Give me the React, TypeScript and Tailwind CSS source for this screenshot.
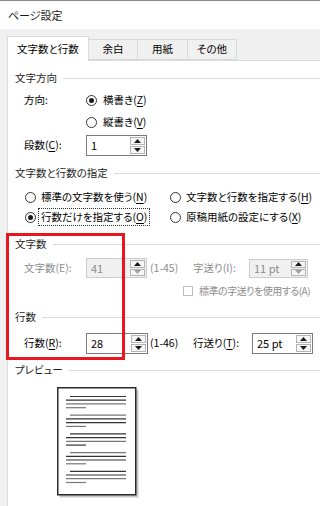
import React from 'react';

// --- small pieces ---
const U = ({ children }: { children: React.ReactNode }) => (
  <span className="underline underline-offset-2">{children}</span>
);

const Radio = ({ checked }: { checked?: boolean }) => (
  <span className="w-[11px] h-[11px] rounded-full border border-[#333333] bg-white flex items-center justify-center shrink-0">
    {checked && <span className="w-[5px] h-[5px] rounded-full bg-[#1a1a1a]" />}
  </span>
);

const Heading = ({ label, className = '' }: { label: string; className?: string }) => (
  <div className={`flex items-center h-[22px] pl-[7px] ${className}`}>
    <span className="text-[#1e1e1e]">{label}</span>
    <span className="flex-1 h-px bg-[#dcdcdc] ml-[6px]" />
  </div>
);

const Arrow = ({ up, color }: { up?: boolean; color: string }) => (
  <svg width="7" height="4" viewBox="0 0 7 4">
    <path d={up ? 'M0 4 L3.5 0 L7 4 Z' : 'M0 0 L3.5 4 L7 0 Z'} fill={color} />
  </svg>
);

const Spin = ({ value, className, disabled }: { value: string; className: string; disabled?: boolean }) => (
  <div
    className={`flex shrink-0 border ${className} ${
      disabled ? 'border-[#cccccc] bg-[#f0f0f0] text-[#8c8c8c]' : 'border-[#7a7a7a] bg-white text-black'
    }`}
  >
    <span className="flex-1 flex items-center pl-[4px] text-[11px]">{value}</span>
    <div className="flex flex-col w-[15px] my-[1px] mr-[1px] gap-px">
      <div className="flex-1 flex items-center justify-center border border-[#b4b4b4] bg-[#f6f6f6]">
        <Arrow up color="#1a1a1a" />
      </div>
      <div className="flex-1 flex items-center justify-center border border-[#b4b4b4] bg-[#f6f6f6]">
        <Arrow color={disabled ? '#a0a0a0' : '#1a1a1a'} />
      </div>
    </div>
  </div>
);

// preview page: five paragraphs of grey/black rules
const PreviewPage = () => {
  const paras = [0, 1, 2, 3, 4];
  return (
    <svg width="82" height="111" viewBox="0 0 82 111">
      <rect x="2.5" y="2.5" width="79" height="108" fill="#c8c8c8" />
      <rect x="0.75" y="0.75" width="78" height="107" fill="#ffffff" stroke="#2b2b2b" strokeWidth="1.5" />
      {paras.map((p) => {
        const y = 9.5 + p * 18.7;
        return (
          <g key={p} strokeWidth="1.2">
            <line x1="13" y1={y} x2="69" y2={y} stroke={p % 2 ? '#777777' : '#333333'} />
            <line x1="9" y1={y + 3.7} x2="69" y2={y + 3.7} stroke="#333333" />
            <line x1="9" y1={y + 7.4} x2="69" y2={y + 7.4} stroke={p % 2 ? '#333333' : '#777777'} />
            <line x1="9" y1={y + 11.2} x2="29" y2={y + 11.2} stroke={p === 2 ? '#333333' : '#777777'} />
          </g>
        );
      })}
    </svg>
  );
};

export default function App() {
  return (
    <div className="w-[320px] h-[506px] overflow-hidden relative bg-[#f0f0f0] text-[10.5px] leading-none text-black font-['Noto_Sans_CJK_JP',sans-serif] [font-feature-settings:'palt']">
      {/* title bar */}
      <div className="h-[29px] bg-white border-t border-[#8a8a8a] flex items-center pl-[8px] text-[11px] text-[#1a1a1a]">
        ページ設定
      </div>

      {/* tabs */}
      <div className="flex items-end pt-[7px] pl-[7px] h-[31px]">
        <div className="relative z-10 -mb-px h-[25px] w-[82px] bg-white border border-b-0 border-[#d9d9d9] flex items-center justify-center">
          文字数と行数
        </div>
        <div className="h-[21px] w-[49px] border border-l-0 border-[#d9d9d9] flex items-center justify-center">余白</div>
        <div className="h-[21px] w-[50px] border border-l-0 border-[#d9d9d9] flex items-center justify-center">用紙</div>
        <div className="h-[21px] w-[49px] border border-l-0 border-[#d9d9d9] flex items-center justify-center">その他</div>
      </div>

      {/* panel */}
      <div className="ml-[7px] h-[447px] bg-white border-l border-t border-[#d9d9d9] pt-[6px]">
        <Heading label="文字方向" />
        <div className="flex items-center h-[22px] pl-[16px]">
          <span className="w-[62px]">方向:</span>
          <Radio checked />
          <span className="ml-[6px]">横書き(<U>Z</U>)</span>
        </div>
        <div className="flex items-center h-[22px] pl-[78px]">
          <Radio />
          <span className="ml-[6px]">縦書き(<U>V</U>)</span>
        </div>
        <div className="flex items-center h-[24px] pl-[16px]">
          <span className="w-[62px]">段数(<U>C</U>):</span>
          <Spin value="1" className="w-[61px] h-[21px]" />
        </div>

        <Heading label="文字数と行数の指定" className="mt-[5px]" />
        <div className="mt-[3px] grid grid-cols-[145px_1fr] pl-[17px]">
          <div className="flex items-center h-[20px]">
            <Radio />
            <span className="ml-[5px]">標準の文字数を使う(<U>N</U>)</span>
          </div>
          <div className="flex items-center h-[20px]">
            <Radio />
            <span className="ml-[5px] whitespace-nowrap">文字数と行数を指定する(<U>H</U>)</span>
          </div>
          <div className="flex items-center h-[20px]">
            <Radio checked />
            <span className="ml-[2px] px-[2px] py-[3px] border border-dotted border-[#333333] whitespace-nowrap">
              行数だけを指定する(<U>O</U>)
            </span>
          </div>
          <div className="flex items-center h-[20px]">
            <Radio />
            <span className="ml-[5px] whitespace-nowrap">原稿用紙の設定にする(<U>X</U>)</span>
          </div>
        </div>

        <Heading label="文字数" className="mt-[6px]" />
        <div className="mt-[2px] flex items-center h-[22px] pl-[16px] text-[#8c8c8c]">
          <span className="w-[62px] shrink-0">文字数(E):</span>
          <Spin value="41" className="w-[61px] h-[20px]" disabled />
          <span className="ml-[3px] w-[43px] shrink-0">(1-45)</span>
          <span className="w-[56px] shrink-0">字送り(I):</span>
          <Spin value="11 pt" className="w-[59px] h-[19px]" disabled />
        </div>
        <div className="mt-[1px] flex items-center h-[22px] pl-[175px] text-[#8c8c8c]">
          <span className="w-[10px] h-[10px] shrink-0 border border-[#bcbcbc] bg-white" />
          <span className="ml-[6px] whitespace-nowrap text-[10px] tracking-[-0.5px]">標準の字送りを使用する(A)</span>
        </div>

        <Heading label="行数" className="mt-[4px]" />
        <div className="mt-[4px] flex items-center h-[22px] pl-[16px]">
          <span className="w-[62px] shrink-0">行数(<U>R</U>):</span>
          <Spin value="28" className="w-[62px] h-[21px]" />
          <span className="ml-[2px] w-[43px] shrink-0">(1-46)</span>
          <span className="w-[59px] shrink-0">行送り(<U>T</U>):</span>
          <Spin value="25 pt" className="w-[61px] h-[21px]" />
        </div>

        <Heading label="プレビュー" className="mt-[5px]" />
        <div className="mt-[6px] pl-[49px]">
          <PreviewPage />
        </div>
      </div>

      {/* red annotation box */}
      <div className="absolute left-[6px] top-[233px] w-[119px] h-[127px] border-[3px] border-[#e8161e] pointer-events-none" />
    </div>
  );
}
